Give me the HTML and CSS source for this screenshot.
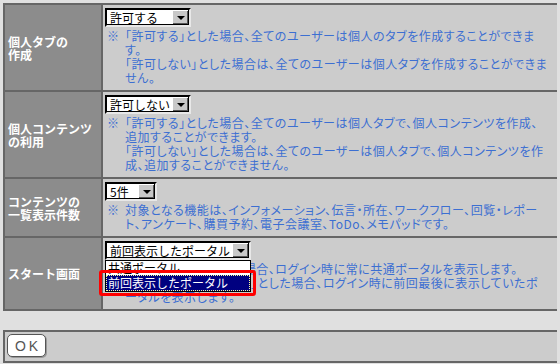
FILE: index.html
```html
<!DOCTYPE html>
<html lang="ja">
<head>
    <meta charset="UTF-8">
    <title>個人設定</title>
    <link rel="stylesheet" href="styles.css">
</head>
<body>
    <table class="settings">
        <tr>
            <th>個人タブの<br>作成</th>
            <td>
                <div class="select select-m"><span class="value">許可する</span><span class="arrow"></span></div>
                <div class="note">
                    <span class="mark">※</span>
                    <div class="note-body">
                        <p>「許可する」とした場合、全てのユーザーは個人のタブを作成することができま<br>す。</p>
                        <p>「許可しない」とした場合は、全てのユーザーは個人タブを作成することができま<br>せん。</p>
                    </div>
                </div>
            </td>
        </tr>
        <tr>
            <th>個人コンテンツ<br>の利用</th>
            <td>
                <div class="select select-m"><span class="value">許可しない</span><span class="arrow"></span></div>
                <div class="note">
                    <span class="mark">※</span>
                    <div class="note-body">
                        <p>「許可する」とした場合、全てのユーザーは個人タブで、個人コンテンツを作成、<br>追加することができます。</p>
                        <p>「許可しない」とした場合は、全てのユーザーは個人タブで、個人コンテンツを作<br>成、追加することができません。</p>
                    </div>
                </div>
            </td>
        </tr>
        <tr>
            <th>コンテンツの<br>一覧表示件数</th>
            <td>
                <div class="select select-s"><span class="value">5件</span><span class="arrow"></span></div>
                <div class="note">
                    <span class="mark">※</span>
                    <div class="note-body">
                        <p>対象となる機能は、インフォメーション、伝言・所在、ワークフロー、回覧・レポー<br>ト、アンケート、購買予約、電子会議室、ToDo、メモパッドです。</p>
                    </div>
                </div>
            </td>
        </tr>
        <tr>
            <th>スタート画面</th>
            <td>
                <div class="select-wrap">
                    <div class="select select-l"><span class="value">前回表示したポータル</span><span class="arrow"></span></div>
                    <ul class="options">
                        <li>共通ポータル</li>
                        <li class="selected">前回表示したポータル</li>
                    </ul>
                </div>
                <div class="note">
                    <span class="mark">※</span>
                    <div class="note-body">
                        <p>「共通ポータル」とした場合、ログイン時に常に共通ポータルを表示します。</p>
                        <p>「前回表示したポータル」とした場合、ログイン時に前回最後に表示していたポ<br>ータルを表示します。</p>
                    </div>
                </div>
            </td>
        </tr>
    </table>

    <div class="buttons">
        <button class="ok">OK</button>
    </div>
</body>
</html>
```

FILE: styles.css
```css
body {
    margin: 3px;
    background: #e0e0e0;
    font-family: "Noto Sans CJK JP", sans-serif;
    font-size: 12px;
}
.settings {
    width: 556px;
    background: #666;
    border-spacing: 2px;
}
.settings th {
    width: 90px;
    padding: 0 3px;
    background: #8c8c8c;
    color: #fff;
    font-weight: bold;
    line-height: 13px;
    text-align: left;
    vertical-align: middle;
}
.settings td {
    padding: 3px 4px 5px 2px;
    background: #cccccc;
    vertical-align: top;
}
.select {
    display: flex;
    height: 19px;
    box-sizing: border-box;
    background: #fff;
    border: 2px solid #000;
    border-right-color: #e8e8e8;
    border-bottom-color: #e8e8e8;
    box-shadow: inset -1px -1px 0 #000;
    margin-bottom: 2px;
}
.select-s { width: 52px; }
.select-m { width: 86px; }
.select-l { width: 146px; }
.select .value {
    flex: 1;
    padding-left: 3px;
    line-height: 15px;
    color: #000;
    white-space: nowrap;
    overflow: hidden;
}
.select .arrow {
    width: 15px;
    margin: 0 1px 1px 0;
    background: #c8c8c8;
    border-left: 1px solid #fff;
    border-top: 1px solid #fff;
    box-shadow: inset -1px -1px 0 #555;
    position: relative;
}
.select .arrow::after {
    content: "";
    position: absolute;
    left: 4px;
    top: 5px;
    border-left: 4px solid transparent;
    border-right: 4px solid transparent;
    border-top: 4px solid #000;
}
.select-wrap {
    position: relative;
}
.options {
    position: absolute;
    top: 19px;
    left: 0;
    width: 146px;
    box-sizing: border-box;
    margin: 0;
    padding: 0;
    list-style: none;
    background: #fff;
    border: 1px solid #000;
    z-index: 2;
}
.options li {
    height: 14px;
    line-height: 14px;
    padding-left: 2px;
    color: #000;
    white-space: nowrap;
}
.options li.selected {
    height: 16px;
    line-height: 16px;
    background: #000080;
    color: #fff;
    outline: 1px dotted #ffff99;
    outline-offset: -1px;
    position: relative;
}
.options li.selected::after {
    content: "";
    position: absolute;
    left: -7px;
    right: -6px;
    top: -5px;
    bottom: -5px;
    border: 3px solid #ff0000;
    border-radius: 3px;
}
.note {
    display: flex;
    color: #3c6fd2;
    line-height: 14px;
    font-feature-settings: "palt";
    letter-spacing: 0.5px;
}
.note .mark {
    width: 18px;
    padding-left: 2px;
    flex-shrink: 0;
}
.note-body {
    white-space: nowrap;
}
.note-body p {
    margin: 0;
}
.buttons {
    width: 552px;
    margin-top: 19px;
    padding: 2px;
    height: 25px;
    background: #cccccc;
    border: 2px solid #666;
}
.ok {
    width: 39px;
    height: 23px;
    padding: 0;
    background: #fff;
    border: 1px solid #555;
    border-radius: 5px;
    box-shadow: 1px 1px 0 #999;
    color: #555;
    font-family: "Liberation Sans", sans-serif;
    font-size: 14px;
    letter-spacing: 3px;
    text-indent: 3px;
}
```
